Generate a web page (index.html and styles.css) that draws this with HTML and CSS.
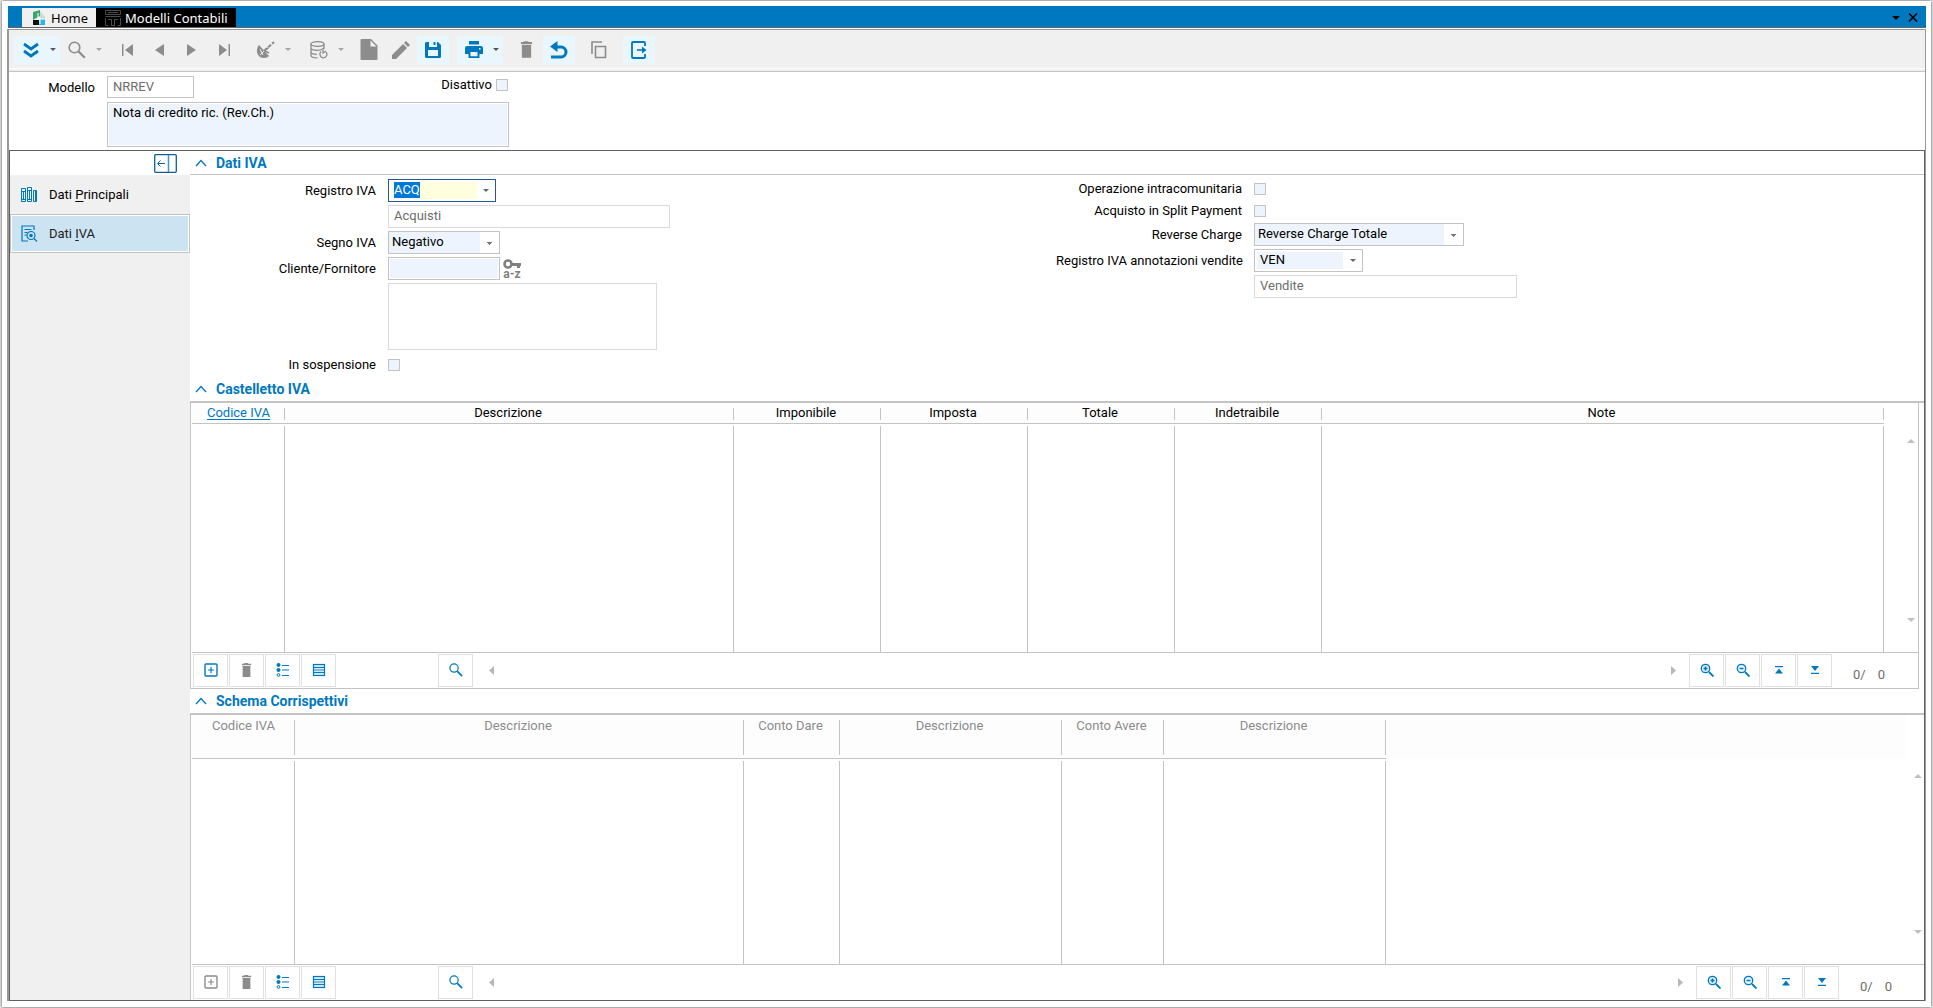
FILE: index.html
```html
<!DOCTYPE html>
<html lang="it">
<head>
<meta charset="utf-8">
<title>Modelli Contabili</title>
<link rel="stylesheet" href="styles.css">
</head>
<body>
<svg class="sprite" aria-hidden="true">
  <symbol id="caret" viewBox="0 0 6 3"><path d="M0 0h6L3 3z" fill="currentColor"/></symbol>
  <symbol id="chevron" viewBox="0 0 12 8"><path d="M1 7l5-5.500 5 5.500" fill="none" stroke="currentColor" stroke-width="1.300"/></symbol>
  <symbol id="search" viewBox="0 0 18 18"><circle cx="6.500" cy="6.500" r="5.300" fill="none" stroke="currentColor" stroke-width="1.600"/><path d="M10.500 10.500l6.300 6.300" stroke="currentColor" stroke-width="2.200"/></symbol>
  <symbol id="trash" viewBox="0 0 14 18"><path d="M4.500 0h4l1 1H13v2H1V1h2.500zM2 4h10v14H2z" fill="currentColor"/></symbol>
  <symbol id="add" viewBox="0 0 14 14"><rect x="1" y="1" width="12" height="12" rx="1" fill="none" stroke="currentColor" stroke-width="1.400"/><path d="M7 4v6M4 7h6" stroke="currentColor" stroke-width="1.200"/></symbol>
  <symbol id="bullets" viewBox="0 0 14 14"><circle cx="2.500" cy="2" r="2" fill="currentColor"/><circle cx="2.500" cy="7" r="2" fill="currentColor"/><circle cx="2.500" cy="12" r="1.400" fill="none" stroke="currentColor"/><path d="M6 2.500h7M6 12.500h7" stroke="currentColor" stroke-width="1.200"/><path d="M6 7h7" stroke="#7fbce3" stroke-width="2"/></symbol>
  <symbol id="rows" viewBox="0 0 14 14"><rect x="1.500" y="1.500" width="11" height="11" fill="#d6eaf6" stroke="currentColor" stroke-width="1.200"/><path d="M1 4.500h12M1 9.500h12" stroke="currentColor" stroke-width="1.200"/><path d="M2 7h10" stroke="#7fbce3" stroke-width="2"/></symbol>
  <symbol id="zoomin" viewBox="0 0 14 14"><circle cx="5.500" cy="5.500" r="4.200" fill="#e3f1fa" stroke="currentColor" stroke-width="1.300"/><path d="M3.500 5.500h4M5.500 3.500v4" stroke="currentColor" stroke-width="1.600"/><path d="M9 9l4.500 4.500" stroke="currentColor" stroke-width="1.800"/></symbol>
  <symbol id="zoomout" viewBox="0 0 14 14"><circle cx="5.500" cy="5.500" r="4.200" fill="#e3f1fa" stroke="currentColor" stroke-width="1.300"/><path d="M3.500 5.500h4" stroke="currentColor" stroke-width="1.400"/><path d="M9 9l4.500 4.500" stroke="currentColor" stroke-width="1.800"/></symbol>
  <symbol id="top" viewBox="0 0 14 14"><path d="M3 3h8v1.200H3zM7 5.500l4 5H3z" fill="currentColor"/></symbol>
  <symbol id="bottom" viewBox="0 0 14 14"><path d="M3 3h8L7 8zM3 9.800h8V11H3z" fill="currentColor"/></symbol>
  <symbol id="left" viewBox="0 0 5 9"><path d="M5 0v9L0 4.500z" fill="currentColor"/></symbol>
  <symbol id="right" viewBox="0 0 5 9"><path d="M0 0v9l5-4.500z" fill="currentColor"/></symbol>
  <symbol id="up" viewBox="0 0 8 4"><path d="M0 4h8L4 0z" fill="currentColor"/></symbol>
  <symbol id="down" viewBox="0 0 8 4"><path d="M0 0h8L4 4z" fill="currentColor"/></symbol>
</svg>

<div class="window">
  <header class="titlebar">
    <nav class="tabs">
      <a class="tab" href="#home">
        <svg width="12" height="15" viewBox="0 0 12 15"><path d="M0 2l7-2v6L0 10z" fill="#3fa56f"/><path d="M0 10h6v5H0z" fill="#111"/><path d="M7 9h5v6H6z" fill="#29b5e8"/><path d="M7 1l5 6v3L7 8z" fill="#cfd8d5"/><path d="M5 3v6h6M7 9v5" stroke="#fff" fill="none"/></svg>
        Home
      </a>
      <a class="tab active" href="#modelli">
        <svg width="16" height="16" viewBox="0 0 16 16"><g fill="none" stroke="#4b4b4b"><path d="M.5.500h15v4H.5zM.5 6.500h15M.5 8v7.500h3M15.500 8v7.500h-3M3 2.500h10M6 15.500h4M3 9.500h3.500v6M13 9.500H9.500v6"/></g></svg>
        Modelli Contabili
      </a>
    </nav>
    <div class="window-actions">
      <button class="plain" aria-label="Elenco schede"><svg width="8" height="4"><use href="#down"/></svg></button>
      <button class="plain" aria-label="Chiudi"><svg width="10" height="9" viewBox="0 0 10 9"><path d="M1 .5l8 8M9 .5l-8 8" stroke="#000" stroke-width="1.600"/></svg></button>
    </div>
  </header>

  <div class="panel">
    <div class="toolbar" role="toolbar">
      <button class="tool on wide" aria-label="Azioni"><svg width="18" height="16" viewBox="0 0 18 16"><path d="M2 2l7 5 7-5M2 9l7 5 7-5" fill="none" stroke="currentColor" stroke-width="2.800"/></svg><svg class="caret" width="6" height="3"><use href="#caret"/></svg></button>
      <button class="tool wide" aria-label="Cerca"><svg width="18" height="18"><use href="#search"/></svg><svg class="caret" width="6" height="3"><use href="#caret"/></svg></button>
      <button class="tool nav first" aria-label="Primo"><svg width="12" height="12" viewBox="0 0 12 12"><path d="M0 0h1.500v12H0zM11 0v12L3 6z" fill="currentColor"/></svg></button>
      <button class="tool nav" aria-label="Precedente"><svg width="12" height="12" viewBox="0 0 12 12"><path d="M10 0v12L1 6z" fill="currentColor"/></svg></button>
      <button class="tool nav" aria-label="Successivo"><svg width="12" height="12" viewBox="0 0 12 12"><path d="M1 0v12l9-6z" fill="currentColor"/></svg></button>
      <button class="tool nav" aria-label="Ultimo"><svg width="12" height="12" viewBox="0 0 12 12"><path d="M1 0v12l8-6zM10.500 0H12v12h-1.500z" fill="currentColor"/></svg></button>
      <button class="tool wide sat" aria-label="Collegamenti"><svg width="19" height="18" viewBox="0 0 19 18"><path d="M3 4C-1 9 1 17 8 17c2 0 4-.8 5-2z" fill="currentColor"/><path d="M4 8l3 6M8 10l-4 4" stroke="#f0f0f0"/><path d="M9.500 8.500l3-1.500M9 10l4 2" stroke="currentColor" stroke-width="1.500"/><path d="M8 10L18 1" stroke="currentColor" stroke-width="2" stroke-dasharray="4 1.500"/></svg><svg class="caret" width="6" height="3"><use href="#caret"/></svg></button>
      <button class="tool wide db" aria-label="Archivio"><svg width="18" height="18" viewBox="0 0 18 18"><g fill="none" stroke="currentColor" stroke-width="1.300"><ellipse cx="7.500" cy="3" rx="6.500" ry="2.300"/><path d="M1 3v11.500c0 1.500 3 2.400 6.500 2.400M14 3v5M1 7c0 1.500 3 2.300 6.500 2.300M1 11c0 1.500 3 2.300 6 2.300M14 6.500c-1 1.800-3.500 2.600-6.500 2.800"/><path d="M11 10.500c-2 2-1 6.300 2.500 6.300 3 0 4.300-3.300 2.600-5.600"/><path d="M13 8.500v3.500l3-2"/></g></svg><svg class="caret" width="6" height="3"><use href="#caret"/></svg></button>
      <button class="tool doc" aria-label="Nuovo"><svg width="18" height="21" viewBox="0 0 18 21"><path d="M1.500 0H11l6.500 6.500V20q0 1-1 1H1.500q-1 0-1-1V1q0-1 1-1z" fill="currentColor"/><path d="M10.500 1.500v6h6z" fill="#f0f0f0"/></svg></button>
      <button class="tool" aria-label="Modifica"><svg width="18" height="18" viewBox="0 0 18 18"><path d="M0 18v-4L11 3l4 4L4 18zM12 2l2-2 4 4-2 2z" fill="currentColor"/></svg></button>
      <button class="tool on" aria-label="Salva"><svg width="16" height="16" viewBox="0 0 16 16"><path fill-rule="evenodd" d="M1.500 0H13l3 3v11.500q0 1.500-1.500 1.500h-13Q0 16 0 14.500v-13Q0 0 1.500 0zM4 0v5h8V0h-1.500v3h-2V0zM3 8v6h10V8z" fill="currentColor"/></svg></button>
      <button class="tool on wide print" aria-label="Stampa"><svg width="18" height="17" viewBox="0 0 18 17"><path fill-rule="evenodd" d="M4 0h10v3.500H4zM2 5h14q2 0 2 2v6h-3.500v4h-11v-4H0V7q0-2 2-2zm3.500 6v4.200h7V11zM14 7v1.500h1.500V7z" fill="currentColor"/></svg><svg class="caret" width="6" height="3"><use href="#caret"/></svg></button>
      <button class="tool trash" aria-label="Elimina"><svg width="13" height="17"><use href="#trash"/></svg></button>
      <button class="tool on" aria-label="Annulla"><svg width="18" height="18" viewBox="0 0 18 18"><path d="M1 16h10a5 5 0 0 0 0-10H5" fill="none" stroke="currentColor" stroke-width="3"/><path d="M7.500 0v11L0 5.500z" fill="currentColor"/></svg></button>
      <button class="tool copy" aria-label="Copia"><svg width="16" height="18" viewBox="0 0 16 18"><path d="M1 13V1h10M4.500 5.500h10v11h-10z" fill="none" stroke="currentColor" stroke-width="1.600"/></svg></button>
      <button class="tool on exit" aria-label="Esci"><svg width="16" height="18" viewBox="0 0 16 18"><path d="M14 5V2q0-1-1-1H2Q1 1 1 2v14q0 1 1 1h11q1 0 1-1v-3" fill="none" stroke="currentColor" stroke-width="1.800"/><path d="M6 9h7" stroke="currentColor" stroke-width="1.600"/><path d="M11 5.500v7l4.500-3.500z" fill="currentColor"/></svg></button>
    </div>

    <section class="record">
      <label class="label" for="modello">Modello</label>
      <div class="record-fields">
        <div class="record-top">
          <input class="field model" id="modello" value="NRREV" readonly>
          <label class="inline-check">Disattivo <input type="checkbox" class="check"></label>
        </div>
        <textarea class="field desc" aria-label="Descrizione">Nota di credito ric. (Rev.Ch.)</textarea>
      </div>
    </section>

    <div class="body">
      <aside class="sidebar">
        <div class="collapse">
          <button class="plain" aria-label="Riduci menu"><svg width="23" height="19" viewBox="0 0 23 19"><rect x=".7" y=".7" width="21.600" height="17.600" rx="1" fill="#fff" stroke="#0f5e97" stroke-width="1.300"/><path d="M14.500 1v17" stroke="#4b91c4" stroke-width="1.500"/><path d="M11 9.500H4M6.500 6.500l-3 3 3 3" fill="none" stroke="#0f5e97"/></svg></button>
        </div>
        <a class="side-item" href="#principali">
          <svg width="17" height="17" viewBox="0 0 17 17"><g fill="none" stroke="#0078bf"><path d="M.5 2.500h4v13h-4zM6.500 1.500h4v14h-4zM12.500 4.500h3v11h-3zM.5 5.500h4M.5 13.500h4M6.500 4.500h4M6.500 13.500h4M2.500 6v7M8.500 5v8M14.500 5v10"/></g></svg>
          <span>Dati <u>P</u>rincipali</span>
        </a>
        <a class="side-item selected" href="#iva" aria-current="page">
          <svg width="17" height="17" viewBox="0 0 17 17"><g fill="none" stroke="#0078bf" stroke-width="1.200"><path d="M13 5V1H1v15h6M3.500 4.500h7M3.500 7.500h3M3.500 10h2"/><circle cx="10" cy="10.500" r="4"/><path d="M13 13.500l3 3"/><circle cx="10" cy="10.500" r="1.200" fill="#0078bf"/></g></svg>
          <span>Dati <u>I</u>VA</span>
        </a>
      </aside>

      <main class="content">
        <h2 class="section thin"><svg width="12" height="8"><use href="#chevron"/></svg>Dati IVA</h2>
        <form class="form">
          <div class="form-col">
            <div class="row"><label class="label" for="reg">Registro IVA</label>
              <div class="combo focus"><input id="reg" value="ACQ"><button type="button" class="plain" aria-label="Apri elenco"><svg width="6" height="3"><use href="#caret"/></svg></button></div></div>
            <div class="row"><span class="label"></span><input class="field muted w-acq" value="Acquisti" aria-label="Descrizione registro" readonly></div>
            <div class="row"><label class="label" for="segno">Segno IVA</label><select class="select w-segno" id="segno"><option>Negativo</option><option>Positivo</option></select></div>
            <div class="row"><label class="label" for="clifor">Cliente/Fornitore</label><input class="field tint w-segno" id="clifor">
              <button type="button" class="plain key" aria-label="Ricerca a-z"><svg width="18" height="10" viewBox="0 0 18 10"><circle cx="5" cy="5" r="3.500" fill="none" stroke="currentColor" stroke-width="2.600"/><path d="M8 4h10v3h-1v2h-3V7H8z" fill="currentColor"/></svg><span>a-z</span></button></div>
            <div class="row tall"><span class="label"></span><textarea class="field muted notes" aria-label="Ragione sociale" readonly></textarea></div>
            <div class="row"><label class="label" for="sosp">In sospensione</label><input type="checkbox" class="check" id="sosp"></div>
          </div>
          <div class="form-col">
            <div class="row short"><label class="label" for="intra">Operazione intracomunitaria</label><input type="checkbox" class="check" id="intra"></div>
            <div class="row short"><label class="label" for="split">Acquisto in Split Payment</label><input type="checkbox" class="check" id="split"></div>
            <div class="row"><label class="label" for="rev">Reverse Charge</label><select class="select w-rev" id="rev"><option>Reverse Charge Totale</option></select></div>
            <div class="row"><label class="label" for="ven">Registro IVA annotazioni vendite</label>
              <div class="combo"><input id="ven" value="VEN"><button type="button" class="plain" aria-label="Apri elenco"><svg width="6" height="3"><use href="#caret"/></svg></button></div></div>
            <div class="row"><span class="label"></span><input class="field muted w-ven" value="Vendite" aria-label="Descrizione registro vendite" readonly></div>
          </div>
        </form>

        <h2 class="section"><svg width="12" height="8"><use href="#chevron"/></svg>Castelletto IVA</h2>
        <div class="grid boxed">
          <div class="grid-main">
            <table class="table">
              <colgroup><col class="c-code"><col class="c-desc"><col class="c-num"><col class="c-num"><col class="c-num"><col class="c-num"><col></colgroup>
              <thead><tr><th><a href="#codice">Codice IVA</a></th><th>Descrizione</th><th>Imponibile</th><th>Imposta</th><th>Totale</th><th>Indetraibile</th><th>Note</th></tr></thead>
              <tbody><tr><td></td><td></td><td></td><td></td><td></td><td></td><td></td></tr></tbody>
            </table>
            <div class="gutter"><svg width="8" height="4"><use href="#up"/></svg><svg width="8" height="4"><use href="#down"/></svg></div>
          </div>
          <div class="foot">
            <button class="fbtn" aria-label="Aggiungi riga"><svg width="14" height="14"><use href="#add"/></svg></button>
            <button class="fbtn off" aria-label="Elimina riga"><svg width="11" height="14"><use href="#trash"/></svg></button>
            <button class="fbtn" aria-label="Selezione"><svg width="14" height="14"><use href="#bullets"/></svg></button>
            <button class="fbtn" aria-label="Vista righe"><svg width="14" height="14"><use href="#rows"/></svg></button>
            <button class="fbtn find" aria-label="Cerca"><svg width="14" height="14"><use href="#search"/></svg></button>
            <svg class="scroll-left" width="5" height="9"><use href="#left"/></svg>
            <svg class="scroll-right" width="5" height="9"><use href="#right"/></svg>
            <button class="fbtn" aria-label="Ingrandisci"><svg width="14" height="14"><use href="#zoomin"/></svg></button>
            <button class="fbtn" aria-label="Riduci"><svg width="14" height="14"><use href="#zoomout"/></svg></button>
            <button class="fbtn" aria-label="Prima riga"><svg width="14" height="14"><use href="#top"/></svg></button>
            <button class="fbtn" aria-label="Ultima riga"><svg width="14" height="14"><use href="#bottom"/></svg></button>
            <span class="count"><span>0/</span><span>0</span></span>
          </div>
        </div>

        <h2 class="section"><svg width="12" height="8"><use href="#chevron"/></svg>Schema Corrispettivi</h2>
        <div class="grid lower">
          <div class="grid-main">
            <table class="table">
              <colgroup><col class="c-code2"><col class="c-desc"><col class="c-dare"><col class="c-acc"><col class="c-avere"><col class="c-acc"><col></colgroup>
              <thead><tr><th>Codice IVA</th><th>Descrizione</th><th>Conto Dare</th><th>Descrizione</th><th>Conto Avere</th><th>Descrizione</th><td class="fill"></td></tr></thead>
              <tbody><tr><td></td><td></td><td></td><td></td><td></td><td></td><td class="fill"></td></tr></tbody>
            </table>
            <div class="gutter"><svg width="8" height="4"><use href="#up"/></svg><svg width="8" height="4"><use href="#down"/></svg></div>
          </div>
          <div class="foot">
            <button class="fbtn off" aria-label="Aggiungi riga"><svg width="14" height="14"><use href="#add"/></svg></button>
            <button class="fbtn off" aria-label="Elimina riga"><svg width="11" height="14"><use href="#trash"/></svg></button>
            <button class="fbtn" aria-label="Selezione"><svg width="14" height="14"><use href="#bullets"/></svg></button>
            <button class="fbtn" aria-label="Vista righe"><svg width="14" height="14"><use href="#rows"/></svg></button>
            <button class="fbtn find" aria-label="Cerca"><svg width="14" height="14"><use href="#search"/></svg></button>
            <svg class="scroll-left" width="5" height="9"><use href="#left"/></svg>
            <svg class="scroll-right" width="5" height="9"><use href="#right"/></svg>
            <button class="fbtn" aria-label="Ingrandisci"><svg width="14" height="14"><use href="#zoomin"/></svg></button>
            <button class="fbtn" aria-label="Riduci"><svg width="14" height="14"><use href="#zoomout"/></svg></button>
            <button class="fbtn" aria-label="Prima riga"><svg width="14" height="14"><use href="#top"/></svg></button>
            <button class="fbtn" aria-label="Ultima riga"><svg width="14" height="14"><use href="#bottom"/></svg></button>
            <span class="count"><span>0/</span><span>0</span></span>
          </div>
        </div>
      </main>
    </div>
  </div>
</div>
<script src="app.js"></script>
</body>
</html>
```
FILE: app.js
```js
// The register code is ready to be overtyped when the form opens.
const register = document.getElementById('reg');
register.focus();
register.select();
```
FILE: styles.css
```css
* { box-sizing: border-box; }

:root {
  --blue: #0078bf;
  --line: #c3c3c3;
  --grey: #8c8c8c;
  --tint: #edf4fd;
}

body {
  margin: 0;
  padding: 1px 2px 3px;
  background: #ececec;
  font: 13px/16px Roboto, "Liberation Sans", sans-serif;
  color: #000;
}

input, select, textarea, button { font: inherit; color: inherit; margin: 0; }
svg { display: block; flex: none; }
.sprite { position: absolute; width: 0; height: 0; }

.plain { border: 0; padding: 0; background: none; display: flex; align-items: center; justify-content: center; }

.window {
  min-height: calc(100vh - 4px);
  padding: 5px 5px 6px;
  background: #fff;
  box-shadow: 0 0 3px rgba(0, 0, 0, .7);
  display: flex;
  flex-direction: column;
}

/* Title bar */
.titlebar {
  display: flex;
  justify-content: space-between;
  height: 22px;
  margin: 0 0 1px 1px;
  padding: 2px 8px 0 14px;
  background: var(--blue);
  border-bottom: 1px solid #666;
}
.tabs { display: flex; font: 13px/20px "Noto Sans", "Open Sans", sans-serif; }
.tab { display: flex; align-items: center; gap: 6px; padding: 0 8px 0 11px; background: #f0f0f0; color: #000; text-decoration: none; }
.tab.active { background: #000; color: #fff; gap: 4px; padding: 0 8px 0 9px; }
.window-actions { display: flex; gap: 8px; }

/* Panel and toolbar */
.panel { flex: 1; display: flex; flex-direction: column; border: solid #999; border-width: 1px 1px 0 2px; }
.toolbar {
  display: flex;
  align-items: center;
  height: 42px;
  padding: 0 5px 2px;
  background: #f0f0f0;
  border-bottom: 1px solid var(--line);
  box-shadow: inset 0 -2px #f0f0f0, inset 0 -3px #fff;
}
.tool { width: 32px; height: 28px; padding: 0; border: 0; background: none; color: var(--grey); display: flex; align-items: center; justify-content: center; }
.tool.on { background: #eaf6fe; color: var(--blue); }
.tool.wide { width: 46px; gap: 10px; padding-left: 4px; }
.tool .caret { color: #a5a5a5; }
.tool.on .caret { color: #555; }
.tool.first { margin-left: 6px; }
.tool.sat { margin-left: 8px; }
.tool.db { margin-left: 8px; }
.tool.doc { margin-left: 5px; }
.tool.print { margin-left: 8px; }
.tool.trash { margin-left: 7px; margin-right: 1px; }
.tool.copy { margin-left: 8px; }
.tool.exit { margin-left: 8px; }

/* Record header */
.record { display: flex; gap: 12px; padding: 4px 0 3px; }
.record .label { width: 86px; line-height: 24px; }
.record-fields { width: 402px; }
.record-top { display: flex; justify-content: space-between; margin-bottom: 4px; }
.inline-check { display: flex; align-items: center; gap: 4px; height: 18px; padding-right: 1px; }

.label { text-align: right; white-space: nowrap; flex: none; }
.field { display: block; height: 23px; padding: 0 5px 2px; border: 1px solid var(--line); border-radius: 0; background: #fff; color: #6d6d6d; outline: 0; }
.field.model { width: 87px; height: 22px; }
.field.desc { width: 100%; height: 45px; padding: 2px 5px; background: var(--tint); box-shadow: inset 0 0 0 1px #fff; color: #000; resize: none; }
.field.muted { border-color: #dadada; }
.field.tint { background: var(--tint); box-shadow: inset 0 0 0 1px #fff; }
.check { appearance: none; width: 12px; height: 12px; border: 1px solid var(--line); background: var(--tint); }

/* Body */
.body { flex: 1; display: flex; border: 1px solid #606060; }
.sidebar { width: 180px; flex: none; background: #f0f0f0; }
.collapse { display: flex; justify-content: flex-end; align-items: flex-start; height: 24px; padding: 3px 13px 0 0; background: #fff; }
.side-item { display: flex; align-items: center; gap: 11px; height: 39px; padding: 0 11px; color: #000; text-decoration: none; }
.side-item.selected { padding: 0 10px; border: 1px solid var(--line); background: #cce4f2; box-shadow: inset 0 0 0 1px #fff; color: #222; }
.side-item u { text-underline-offset: 2px; }

.content { flex: 1; min-width: 0; display: flex; flex-direction: column; }
.section { display: flex; align-items: center; gap: 9px; height: 26px; margin: 0; padding: 0 5px; border-bottom: 2px solid var(--line); color: var(--blue); font-size: 14px; line-height: 16px; font-weight: 700; }
.section.thin { height: 24px; border-bottom-width: 1px; }

.form { display: grid; grid-template-columns: 1fr 1fr; padding: 4px 2px 1px 0; }
.form-col { display: flex; flex-direction: column; gap: 3px; }
.row { display: flex; align-items: center; height: 23px; }
.row.tall { height: 67px; }
.row.short { height: 19px; }
.row .label { width: 186px; margin-right: 12px; }
.w-acq { width: 282px; }
.w-ven { width: 263px; }
.w-segno { width: 112px; }
.w-rev { width: 210px; }
.notes { width: 269px; height: 67px; resize: none; }

.select {
  appearance: none;
  height: 23px;
  padding: 0 22px 2px 3px;
  border: 1px solid var(--line);
  border-radius: 0;
  background:
    linear-gradient(#777, #777) right 7px top 10px / 5px 1px no-repeat,
    linear-gradient(#777, #777) right 8px top 11px / 3px 1px no-repeat,
    linear-gradient(#777, #777) right 9px top 12px / 1px 1px no-repeat,
    linear-gradient(#fff, #fff) right / 19px 100% no-repeat,
    var(--tint);
}
.combo { display: flex; width: 109px; height: 23px; padding: 2px 0 2px 2px; border: 1px solid var(--line); background: #fff; }
.combo input { width: 86px; padding: 0 0 2px 3px; border: 0; outline: 0; background: var(--tint); }
.combo button { flex: 1; color: #666; }
.combo.focus { width: 108px; border-color: #2a5699; }
.combo.focus input { background: #ffffde; }
.combo ::selection { background: #0078d7; color: #fff; }
.key { flex-direction: column; width: 18px; margin-left: 3px; color: #808080; font-size: 12px; line-height: 10px; font-weight: 700; }

/* Grids */
.grid { border-left: 1px solid var(--line); }
.grid.boxed { margin-right: 5px; border-right: 1px solid var(--line); border-bottom: 1px solid var(--line); }
.grid-main { display: flex; margin-left: 1px; border-bottom: 1px solid var(--line); }
.table { flex: 1; width: 0; table-layout: fixed; border-collapse: separate; border-spacing: 0; }
.table th {
  height: 21px;
  padding: 0;
  font-weight: 400;
  text-align: center;
  vertical-align: top;
  line-height: 20px;
  border-bottom: 1px solid var(--line);
  background: linear-gradient(var(--line), var(--line)) right 5px / 1px calc(100% - 8px) no-repeat, #fdfdfd;
}
.table th + th { padding-right: 3px; }
.table th a { color: var(--blue); text-underline-offset: 2px; }
.table td { height: 228px; padding: 0; background: linear-gradient(var(--line), var(--line)) right 2px / 1px 100% no-repeat; }
.gutter { display: flex; flex-direction: column; justify-content: space-between; align-items: flex-end; width: 34px; padding: 36px 3px 30px 0; color: #c0c0c0; }
.lower .table th { height: 44px; color: var(--grey); line-height: 22px; }
.lower .table td { height: 205px; }
.lower .table td.fill { background: none; }
.lower .table thead td.fill { height: 44px; background: #fdfdfd; }
.lower .gutter { width: 18px; padding: 59px 2px 30px 0; }

.c-code { width: 93px; }
.c-code2 { width: 103px; }
.c-desc { width: 449px; }
.c-num { width: 147px; }
.c-dare { width: 96px; }
.c-acc { width: 222px; }
.c-avere { width: 102px; }

.foot { display: flex; align-items: center; gap: 1px; height: 35px; padding-left: 2px; }
.boxed .foot { padding-right: 1px; }
.fbtn { width: 35px; height: 33px; padding: 0 0 2px; border: 1px solid #e0e0e0; background: #fff; color: var(--blue); display: flex; align-items: center; justify-content: center; }
.fbtn.off { color: var(--grey); }
.fbtn.find { margin-left: 101px; }
.foot .scroll-left { margin-left: 15px; margin-right: auto; color: #b8b8b8; }
.foot .scroll-right { margin-right: 12px; color: #b8b8b8; }
.count { display: flex; justify-content: space-between; width: 32px; margin: 8px 32px 0 20px; color: #6d6d6d; }
```
